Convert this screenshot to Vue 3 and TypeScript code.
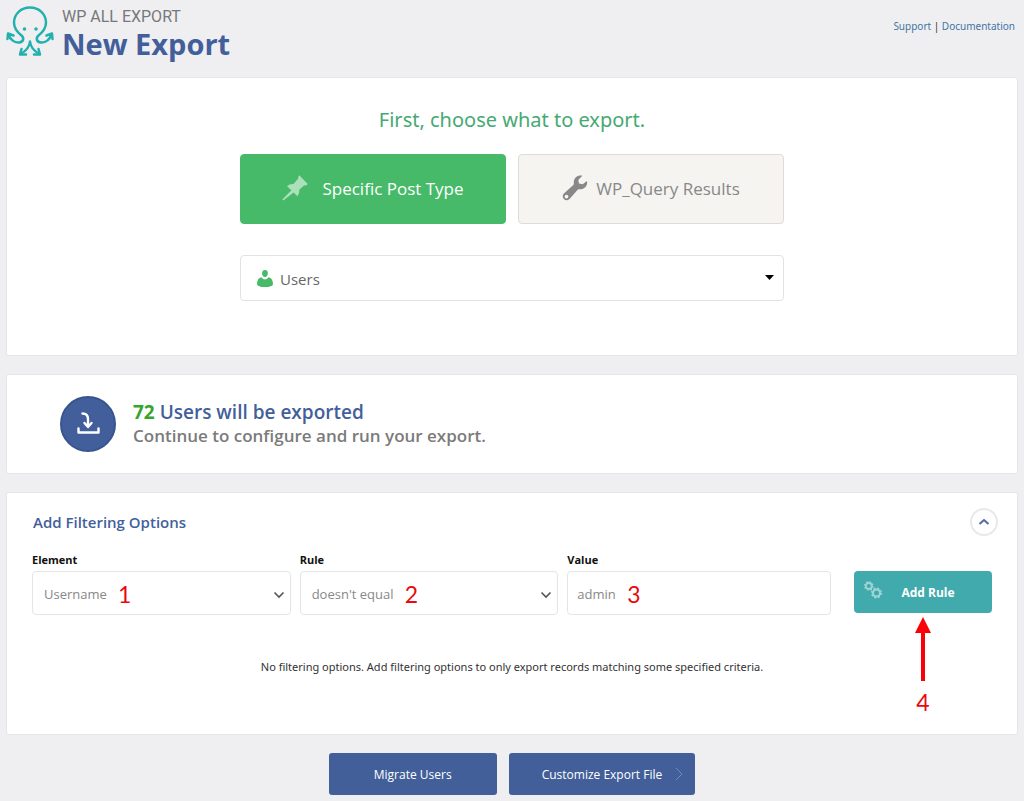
<script setup lang="ts">
import { ref } from 'vue'

const exportType = ref<'specific' | 'query'>('specific')
const postType = ref('Users')
const element = ref('Username')
const rule = ref("doesn't equal")
const value = ref('admin')
const count = ref(72)
const open = ref(true)

const postTypes = ['Users', 'Posts', 'Pages']
const elements = ['Username', 'Email', 'Role']
const rules = ["doesn't equal", 'equals', 'contains']
</script>

<template>
  <div class="page">
    <header class="header">
      <div class="brand">
        <svg class="logo" viewBox="0 0 48 50" aria-hidden="true">
          <g fill="none" stroke="#22b1ae" stroke-width="2.500" stroke-linecap="round" stroke-linejoin="round">
            <path d="M2.500 28.500C4 33 8 37 13 36.500C17.500 36 18.500 32 15.500 29.500C11 26 8 22 8 16.500C8 8 15 1.500 24 1.500C33 1.500 40 8 40 16.500C40 22 37 26 32.500 29.500C29.500 32 30.500 36 35 36.500C40 37 44 33 45.500 28.500" />
            <path d="M1.500 33L2 27.500L7.500 29.500M46.500 33L46 27.500L40.500 29.500" />
            <path d="M24 35.500C23.500 41 20 45 14.500 48M24 35.500C24.500 41 28 45 33.500 48" />
            <path d="M15.500 43L14 48.500L20 48.500M32.500 43L34 48.500L28 48.500" />
          </g>
          <circle cx="18.500" cy="23" r="1.800" fill="#22b1ae" />
          <circle cx="30" cy="23" r="1.800" fill="#22b1ae" />
        </svg>
        <div>
          <p class="product">WP ALL EXPORT</p>
          <h1>New Export</h1>
        </div>
      </div>
      <nav class="links"><a href="#support">Support</a> | <a href="#documentation">Documentation</a></nav>
    </header>

    <main>
      <section class="card choose">
        <h2>First, choose what to export.</h2>
        <div class="types">
          <button type="button" class="type" :class="{ active: exportType === 'specific' }" @click="exportType = 'specific'">
            <svg class="pin" viewBox="0 0 26 26" aria-hidden="true">
              <path fill="currentColor" d="M17.300.300Q16 1.200 16.200 3.600L11.500 9Q7.500 8.700 5 11.200L9.400 15.200L.600 24.200Q.200 25.600 1.700 25.300L11.600 17.400L15.400 21.200Q17.800 18.600 17.300 14.800L22 10.500Q24.600 10.800 25.700 9Z" />
            </svg>
            <span>Specific Post Type</span>
          </button>
          <button type="button" class="type" :class="{ active: exportType === 'query' }" @click="exportType = 'query'">
            <svg class="wrench" viewBox="0 0 26 26" aria-hidden="true">
              <path fill="currentColor" fill-rule="evenodd" d="M20.300.800C16.500-.500 12 2.300 11.800 6.800C11.800 8.200 12 9.200 11.300 10L2.200 18.200C-2 22 3.500 27.800 7.500 24L15.700 14.800C16.500 14 17.600 14.300 19 14.200C23.500 13.800 26 9.700 24.900 6L20.700 9.300L17 8.500L16.300 5ZM4.500 19.700A1.900 1.900 0 1 1 4.500 23.500A1.900 1.900 0 1 1 4.500 19.700Z" />
            </svg>
            <span>WP_Query Results</span>
          </button>
        </div>
        <div class="post-type">
          <svg class="user" viewBox="0 0 16 17" aria-hidden="true">
            <path fill="#46ba69" d="M8 0C12.200 0 11.500 7 8 7C4.500 7 3.800 0 8 0ZM4.300 7.200Q8 11.600 11.700 7.200C14.500 7.800 16 10.500 16 14.200Q15.600 17 8 17Q.400 17 0 14.200C0 10.500 1.500 7.800 4.300 7.200Z" />
          </svg>
          <select v-model="postType" aria-label="Post type">
            <option v-for="item in postTypes" :key="item">{{ item }}</option>
          </select>
          <svg class="caret" viewBox="0 0 9 5" aria-hidden="true"><path d="M0 0H9L4.500 5Z" /></svg>
        </div>
      </section>

      <section class="card summary">
        <svg class="badge" viewBox="0 0 56 56" aria-hidden="true">
          <circle cx="28" cy="28" r="27" fill="#425f9c" stroke="#38558f" stroke-width="2" />
          <g fill="none" stroke="#fff" stroke-width="2.400" stroke-linejoin="round" stroke-linecap="round">
            <path d="M22.500 17.500C26.500 17.500 28 19 28 23V30M24.500 27L28 31L31.500 27M18.500 32.500V36.500H38.500V32.500" />
          </g>
        </svg>
        <div>
          <p class="result"><b>{{ count }}</b> Users will be exported</p>
          <p class="hint">Continue to configure and run your export.</p>
        </div>
      </section>

      <section class="card filters">
        <div class="filters-head">
          <h3>Add Filtering Options</h3>
          <button type="button" class="toggle" aria-label="Toggle filtering options" :aria-expanded="open" @click="open = !open">
            <svg viewBox="0 0 12 8" aria-hidden="true"><path d="M1.500 6L6 2L10.500 6" /></svg>
          </button>
        </div>
        <template v-if="open">
          <div class="row">
            <div class="field">
              <label for="element">Element</label>
              <div class="control">
                <select id="element" v-model="element">
                  <option v-for="item in elements" :key="item">{{ item }}</option>
                </select>
                <svg class="chevron" viewBox="0 0 12 8" aria-hidden="true"><path d="M1.500 1.500L6 6L10.500 1.500" /></svg>
                <span class="mark mark-one">1</span>
              </div>
            </div>
            <div class="field">
              <label for="rule">Rule</label>
              <div class="control">
                <select id="rule" v-model="rule">
                  <option v-for="item in rules" :key="item">{{ item }}</option>
                </select>
                <svg class="chevron" viewBox="0 0 12 8" aria-hidden="true"><path d="M1.500 1.500L6 6L10.500 1.500" /></svg>
                <span class="mark mark-two">2</span>
              </div>
            </div>
            <div class="field">
              <label for="value">Value</label>
              <div class="control">
                <input id="value" v-model="value" type="text" />
                <span class="mark mark-three">3</span>
              </div>
            </div>
            <div class="action">
              <button type="button" class="add">
                <svg class="gears" viewBox="0 0 18 18" aria-hidden="true">
                  <g fill="none" stroke="currentColor">
                    <circle cx="4.800" cy="5" r="3" stroke-width="1.800" />
                    <circle cx="4.800" cy="5" r="4.200" stroke-width="1.200" stroke-dasharray="1.800 1.500" />
                    <circle cx="12.500" cy="12" r="3.500" stroke-width="2" />
                    <circle cx="12.500" cy="12" r="4.900" stroke-width="1.300" stroke-dasharray="2.100 1.750" />
                  </g>
                </svg>
                Add Rule
              </button>
              <div class="pointer">
                <svg viewBox="0 0 16 64" aria-hidden="true"><path fill="#fb0007" d="M8 0L16 16H10V64H6V16H0Z" /></svg>
                <span>4</span>
              </div>
            </div>
          </div>
          <p class="empty">No filtering options. Add filtering options to only export records matching some specified criteria.</p>
        </template>
      </section>
    </main>

    <footer class="footer">
      <button type="button" class="submit">Migrate Users</button>
      <button type="button" class="submit next">
        Customize Export File
        <svg viewBox="0 0 8 14" aria-hidden="true"><path d="M1 1L7 7L1 13" /></svg>
      </button>
    </footer>
  </div>
</template>

<style>
body {
  margin: 0;
  background: #efeff1;
}
</style>

<style scoped>
.page {
  padding: 0 6px 4px;
  font-family: "Open Sans", "Noto Sans", sans-serif;
  font-size: 12px;
  color: #333;
}
h1, h2, h3, p {
  margin: 0;
}
button, select, input {
  font-family: inherit;
  margin: 0;
}
button {
  cursor: pointer;
}
.header {
  display: flex;
  justify-content: space-between;
  height: 77px;
}
.brand {
  display: flex;
  gap: 8px;
  padding-top: 6px;
}
.logo {
  width: 48px;
  height: 50px;
}
.product {
  font-family: Roboto, "Noto Sans", sans-serif;
  font-size: 16px;
  line-height: 22px;
  color: #77787b;
}
h1 {
  font-size: 29px;
  line-height: 32px;
  font-weight: 700;
  color: #435f9b;
}
.links {
  padding: 18px 3px 0 0;
  font-family: "Noto Sans", sans-serif;
  font-size: 10px;
  line-height: 16px;
}
.links a {
  color: #3f75a3;
  text-decoration: none;
}
main {
  display: grid;
  gap: 18px;
}
.card {
  box-sizing: border-box;
  border: 1px solid #e6e6e9;
  border-radius: 3px;
  background: #fff;
}
.choose {
  display: flex;
  flex-direction: column;
  align-items: center;
  padding: 26px 24px 54px;
}
h2 {
  font-family: "Noto Sans", sans-serif;
  font-size: 20px;
  line-height: 32px;
  font-weight: 400;
  color: #46a972;
}
.types {
  display: grid;
  grid-template-columns: 1fr 1fr;
  gap: 12px;
  width: 100%;
  max-width: 544px;
  margin-top: 18px;
}
.type {
  display: flex;
  align-items: center;
  justify-content: center;
  gap: 8px;
  height: 70px;
  padding: 0 0 2px;
  border: 1px solid #dfdcd8;
  border-radius: 4px;
  background: #f6f4f1;
  font-size: 17px;
  color: #888;
}
.type.active {
  gap: 14px;
  border-color: #46ba69;
  background: #46ba69;
  color: #fff;
}
.pin, .wrench {
  width: 26px;
  height: 26px;
}
.pin {
  opacity: 0.55;
}
.post-type {
  position: relative;
  width: 100%;
  max-width: 544px;
  margin-top: 31px;
}
.post-type select {
  display: block;
  box-sizing: border-box;
  width: 100%;
  height: 46px;
  padding: 2px 38px 0 39px;
  border: 1px solid #e3e3e6;
  border-radius: 4px;
  background: #fff;
  appearance: none;
  font-size: 15px;
  color: #666;
}
.user {
  position: absolute;
  left: 17px;
  top: 15px;
  width: 16px;
  height: 17px;
}
.caret {
  position: absolute;
  right: 10px;
  top: 20px;
  width: 9px;
  height: 5px;
}
.summary {
  display: flex;
  align-items: center;
  gap: 17px;
  min-height: 100px;
  padding: 0 53px;
}
.badge {
  width: 56px;
  height: 56px;
}
.result {
  font-size: 19px;
  line-height: 24px;
  font-weight: 600;
  color: #435f9b;
}
.result b {
  font-weight: 700;
  color: #37a52d;
}
.hint {
  font-size: 17px;
  line-height: 24px;
  font-weight: 600;
  color: #7b7b7b;
}
.filters {
  padding: 15px 25px 58px;
}
.filters-head {
  display: flex;
  align-items: center;
  justify-content: space-between;
  margin-right: -6px;
  padding-left: 1px;
}
h3 {
  font-size: 15px;
  line-height: 24px;
  font-weight: 600;
  color: #435f9b;
}
.toggle {
  display: grid;
  place-items: center;
  width: 28px;
  height: 28px;
  padding: 0;
  border: 2px solid #e8e8ed;
  border-radius: 50%;
  background: #fff;
}
.toggle svg {
  width: 12px;
  height: 8px;
  fill: none;
  stroke: #5368a5;
  stroke-width: 2;
}
.row {
  display: grid;
  grid-template-columns: 259fr 259fr 264fr 152px;
  gap: 9px;
  align-items: end;
  margin-top: 16px;
}
.field label {
  display: block;
  font-size: 11px;
  line-height: 16px;
  font-weight: 700;
  color: #111;
}
.control {
  position: relative;
  margin-top: 3px;
}
.control select, .control input {
  display: block;
  box-sizing: border-box;
  width: 100%;
  height: 44px;
  padding: 2px 28px 0 11px;
  border: 1px solid #e5e5e9;
  border-radius: 4px;
  background: #fff;
  appearance: none;
  font-size: 13px;
  color: #888;
}
.control input {
  padding-left: 9px;
}
.chevron {
  position: absolute;
  right: 6px;
  top: 20px;
  width: 12px;
  height: 8px;
  fill: none;
  stroke: #555;
  stroke-width: 1.600;
  pointer-events: none;
}
.mark, .pointer span {
  font-family: Lato, sans-serif;
  font-size: 23px;
  line-height: 28px;
  color: #e9090f;
}
.mark {
  position: absolute;
  top: 9px;
  pointer-events: none;
}
.mark-one {
  left: 86px;
}
.mark-two {
  left: 105px;
}
.mark-three {
  left: 60px;
}
.action {
  position: relative;
  padding: 0 0 2px 14px;
}
.add {
  position: relative;
  display: block;
  width: 100%;
  height: 42px;
  padding: 0 0 0 10px;
  border: 0;
  border-radius: 4px;
  background: #41aaac;
  font-size: 12px;
  font-weight: 700;
  color: #fff;
}
.gears {
  position: absolute;
  left: 10px;
  top: 10px;
  width: 18px;
  height: 18px;
  color: #a0d5d5;
}
.pointer {
  position: absolute;
  left: 14px;
  right: 0;
  top: 46px;
  display: flex;
  flex-direction: column;
  align-items: center;
  gap: 7px;
}
.pointer svg {
  width: 16px;
  height: 64px;
}
.empty {
  margin-top: 43px;
  font-family: "Noto Sans", sans-serif;
  font-size: 11px;
  line-height: 18px;
  text-align: center;
}
.footer {
  display: flex;
  justify-content: center;
  gap: 12px;
  margin-top: 18px;
}
.submit {
  position: relative;
  height: 42px;
  padding: 0 45px;
  border: 0;
  border-radius: 3px;
  background: #425f99;
  font-size: 12px;
  color: #fff;
}
.next {
  padding: 0 33px;
}
.next svg {
  position: absolute;
  right: 12px;
  top: 14px;
  width: 8px;
  height: 14px;
  fill: none;
  stroke: #7189b8;
  stroke-width: 1;
}
</style>
